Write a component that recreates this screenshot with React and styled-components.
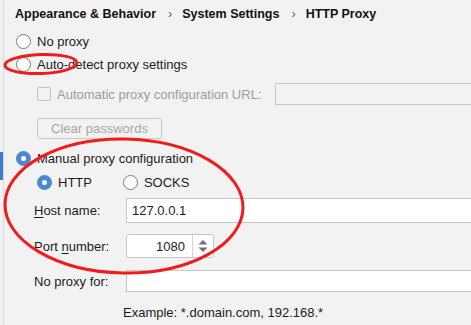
import React from 'react'
import styled, { createGlobalStyle } from 'styled-components'

const GlobalStyle = createGlobalStyle`
  html, body {
    margin: 0;
    padding: 0;
    background: #f2f2f2;
  }
  body {
    font-family: "Liberation Sans", Arial, sans-serif;
    font-size: 13px;
    color: #1c1c1c;
  }
`

function App() {
  return (
    <Page>
      <GlobalStyle />
      <Rail>
        <RailMarker />
      </Rail>

      <Content>
        <Breadcrumb>
          <span>Appearance &amp; Behavior</span>
          <Chevron>›</Chevron>
          <span>System Settings</span>
          <Chevron>›</Chevron>
          <span>HTTP Proxy</span>
        </Breadcrumb>

        <Row h={26}>
          <Radio />
          <Label>No proxy</Label>
        </Row>
        <Row h={20}>
          <Radio />
          <Label>Auto-detect proxy settings</Label>
        </Row>

        <Row h={22} top={9} indent={21}>
          <Checkbox />
          <Label disabled>Automatic proxy configuration URL:</Label>
          <Input disabled left={14} />
        </Row>

        <Row h={21} top={13} indent={21}>
          <Button disabled>Clear passwords</Button>
        </Row>

        <Row h={20} top={9}>
          <Radio checked />
          <Label>Manual proxy configuration</Label>
        </Row>
        <Row h={20} top={4} indent={21}>
          <Radio checked />
          <Label>HTTP</Label>
          <Radio left={31} />
          <Label>SOCKS</Label>
        </Row>

        <Row h={25} top={6} indent={18}>
          <FieldLabel><u>H</u>ost name:</FieldLabel>
          <Input defaultValue="127.0.0.1" />
        </Row>
        <Row h={24} top={11} indent={18}>
          <FieldLabel>Port <u>n</u>umber:</FieldLabel>
          <Spinner>
            <SpinValue>1080</SpinValue>
            <SpinArrows>
              <svg width="12" height="16" viewBox="0 0 12 16">
                <path d="M6 2 L10.5 6.5 L1.5 6.5 Z" fill="#6f6f6f" />
                <path d="M6 14 L10.5 9.5 L1.5 9.5 Z" fill="#6f6f6f" />
              </svg>
            </SpinArrows>
          </Spinner>
        </Row>
        <Row h={22} top={12} indent={18}>
          <FieldLabel>No proxy for:</FieldLabel>
          <Input />
        </Row>
        <Row h={18} top={11} indent={107}>
          <Hint>Example: *.domain.com, 192.168.*</Hint>
        </Row>
      </Content>

      <Annotations width="471" height="325" viewBox="0 0 471 325">
        <ellipse cx="41" cy="64" rx="36" ry="9.5" transform="rotate(-2 41 64)" />
        <ellipse cx="124" cy="206" rx="119" ry="67" transform="rotate(1 124 206)" />
      </Annotations>
    </Page>
  )
}

const Page = styled.div`
  position: relative;
  width: 471px;
  height: 325px;
  overflow: hidden;
  display: flex;
`

const Rail = styled.div`
  width: 3px;
  flex: none;
  border-right: 1px solid #d9d9d9;
  display: flex;
  flex-direction: column;
`

const RailMarker = styled.div`
  margin-top: 152px;
  height: 28px;
  background: #3d7ad6;
`

const Content = styled.div`
  flex: 1;
  display: flex;
  flex-direction: column;
  padding-left: 12px;
  min-width: 0;
`

const Breadcrumb = styled.div`
  height: 28px;
  display: flex;
  align-items: center;
  margin-left: -1px;
  font-weight: bold;
  font-size: 12.5px;
  color: #111;
  white-space: nowrap;
`

const Chevron = styled.span`
  font-weight: normal;
  margin: 0 10px 0 12px;
  color: #555;
`

const Row = styled.div`
  height: ${p => p.h}px;
  margin-top: ${p => p.top || 0}px;
  padding-left: ${p => p.indent || 0}px;
  display: flex;
  align-items: center;
  white-space: nowrap;
`

const Radio = styled.span`
  flex: none;
  box-sizing: border-box;
  width: 15px;
  height: 15px;
  border-radius: 50%;
  margin-left: ${p => p.left || 0}px;
  background: ${p => (p.checked ? '#4a88cf' : '#fff')};
  border: 1px solid ${p => (p.checked ? '#4a88cf' : '#7d7d7d')};
  display: flex;
  align-items: center;
  justify-content: center;
  &::after {
    content: '';
    display: ${p => (p.checked ? 'block' : 'none')};
    width: 5px;
    height: 5px;
    border-radius: 50%;
    background: #fff;
  }
`

const Checkbox = styled.span`
  flex: none;
  box-sizing: border-box;
  width: 14px;
  height: 14px;
  border: 1px solid #c2c2c2;
  border-radius: 2px;
`

const Label = styled.span`
  margin-left: 6px;
  color: ${p => (p.disabled ? '#9c9c9c' : '#1c1c1c')};
`

const FieldLabel = styled.span`
  width: 92px;
  flex: none;
  u {
    text-decoration: underline;
    text-underline-offset: 2px;
  }
`

const Input = styled.input`
  flex: 1;
  min-width: 0;
  height: 100%;
  box-sizing: border-box;
  margin: 0 0 0 ${p => p.left || 0}px;
  margin-right: -10px;
  padding: 0 5px;
  border: 1px solid #c6c6c6;
  border-radius: 0;
  background: ${p => (p.disabled ? '#f2f2f2' : '#fff')};
  font: inherit;
  color: #1c1c1c;
  outline: none;
`

const Button = styled.div`
  box-sizing: border-box;
  width: 125px;
  height: 100%;
  border: 1px solid #c8c8c8;
  border-radius: 3px;
  display: flex;
  align-items: center;
  justify-content: center;
  line-height: 16px;
  color: #a6a6a6;
`

const Spinner = styled.div`
  box-sizing: border-box;
  width: 88px;
  height: 100%;
  display: flex;
  border: 1px solid #c6c6c6;
  border-radius: 3px;
  background: #fff;
`

const SpinValue = styled.div`
  flex: 1;
  display: flex;
  align-items: center;
  justify-content: flex-end;
  padding-right: 7px;
`

const SpinArrows = styled.div`
  width: 20px;
  border-left: 1px solid #d4d4d4;
  display: flex;
  align-items: center;
  justify-content: center;
`

const Hint = styled.span`
  color: #1c1c1c;
`

const Annotations = styled.svg`
  position: absolute;
  left: 0;
  top: 0;
  pointer-events: none;
  ellipse {
    fill: none;
    stroke: #f21b1b;
    stroke-width: 3;
  }
`

export default App
